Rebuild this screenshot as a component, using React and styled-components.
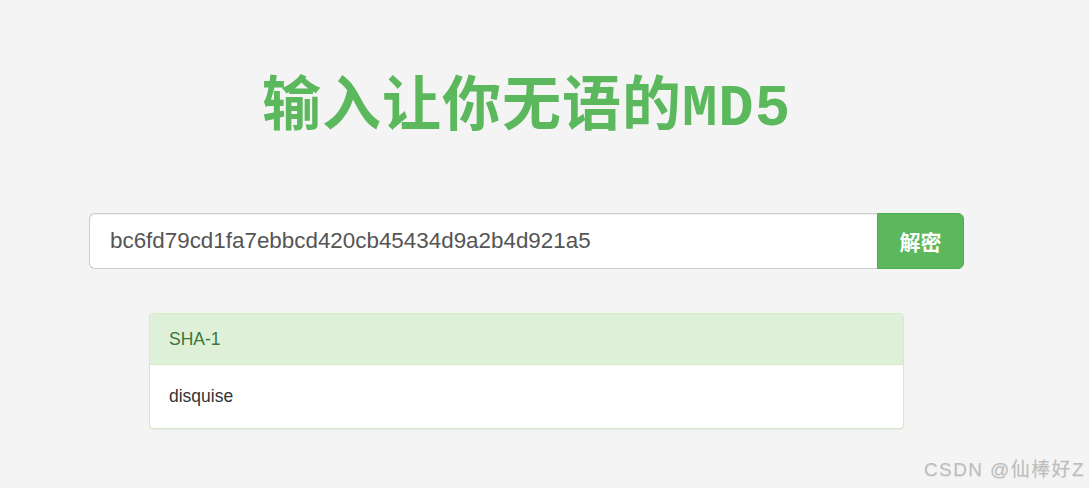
import React from "react";
import styled, { createGlobalStyle } from "styled-components";

const GlobalStyle = createGlobalStyle`
  html, body {
    margin: 0;
    padding: 0;
    background: #f4f4f4;
    font-family: "Liberation Sans", Arial, "Noto Sans CJK SC", sans-serif;
  }
  #root {
    min-height: 488px;
  }
`;

const Page = styled.div`
  position: relative;
  height: 488px;
  overflow: hidden;
`;

const Container = styled.div`
  width: 875px;
  margin-left: 89px;
  padding-top: 72px;
`;

const Title = styled.h1`
  margin: 0;
  text-align: center;
  font-family: "Liberation Mono", "Noto Sans CJK SC", monospace;
  font-weight: bold;
  font-size: 59px;
  line-height: 76px;
  color: #5cb85c;
  letter-spacing: 1px;
`;

const InputGroup = styled.div`
  display: flex;
  margin-top: 65px;
  height: 56px;
`;

const HashInput = styled.input`
  flex: 1;
  min-width: 0;
  box-sizing: border-box;
  height: 56px;
  padding: 0 20px;
  border: 1px solid #ccc;
  border-right: none;
  border-radius: 6px 0 0 6px;
  background: #fff;
  color: #555;
  font-family: "Liberation Sans", Arial, sans-serif;
  font-size: 22.4px;
  outline: none;
  box-shadow: inset 0 1px 1px rgba(0, 0, 0, 0.075);
`;

const DecryptButton = styled.button`
  width: 87px;
  height: 56px;
  border: 1px solid #4cae4c;
  border-radius: 0 6px 6px 0;
  background: #5cb85c;
  color: #fff;
  font-family: "Noto Sans CJK SC", sans-serif;
  font-weight: bold;
  font-size: 21px;
  cursor: pointer;
`;

const Panel = styled.div`
  width: 753px;
  margin: 44px auto 0;
  border: 1px solid #d6e9c6;
  border-radius: 4px;
  background: #fff;
  box-shadow: 0 1px 1px rgba(0, 0, 0, 0.05);
  overflow: hidden;
`;

const PanelHeading = styled.div`
  height: 51px;
  box-sizing: border-box;
  padding: 0 19px;
  display: flex;
  align-items: center;
  background: #dff0d8;
  border-bottom: 1px solid #d6e9c6;
  color: #3c763d;
  font-size: 17.5px;
`;

const PanelBody = styled.div`
  height: 63px;
  box-sizing: border-box;
  padding: 0 19px;
  display: flex;
  align-items: center;
  color: #333;
  font-size: 17.5px;
`;

const Watermark = styled.div`
  position: absolute;
  right: 4px;
  bottom: 7px;
  color: #bdbdbd;
  font-family: "Liberation Sans", Arial, "Noto Sans CJK SC", sans-serif;
  font-size: 19px;
  letter-spacing: 1.4px;
  text-shadow: 0 1px 1px rgba(0, 0, 0, 0.08);
`;

export default function App() {
  return (
    <Page>
      <GlobalStyle />
      <Container>
        <Title>输入让你无语的MD5</Title>
        <InputGroup>
          <HashInput
            defaultValue="bc6fd79cd1fa7ebbcd420cb45434d9a2b4d921a5"
            readOnly
          />
          <DecryptButton>解密</DecryptButton>
        </InputGroup>
        <Panel>
          <PanelHeading>SHA-1</PanelHeading>
          <PanelBody>disquise</PanelBody>
        </Panel>
      </Container>
      <Watermark>CSDN @仙棒好Z</Watermark>
    </Page>
  );
}
